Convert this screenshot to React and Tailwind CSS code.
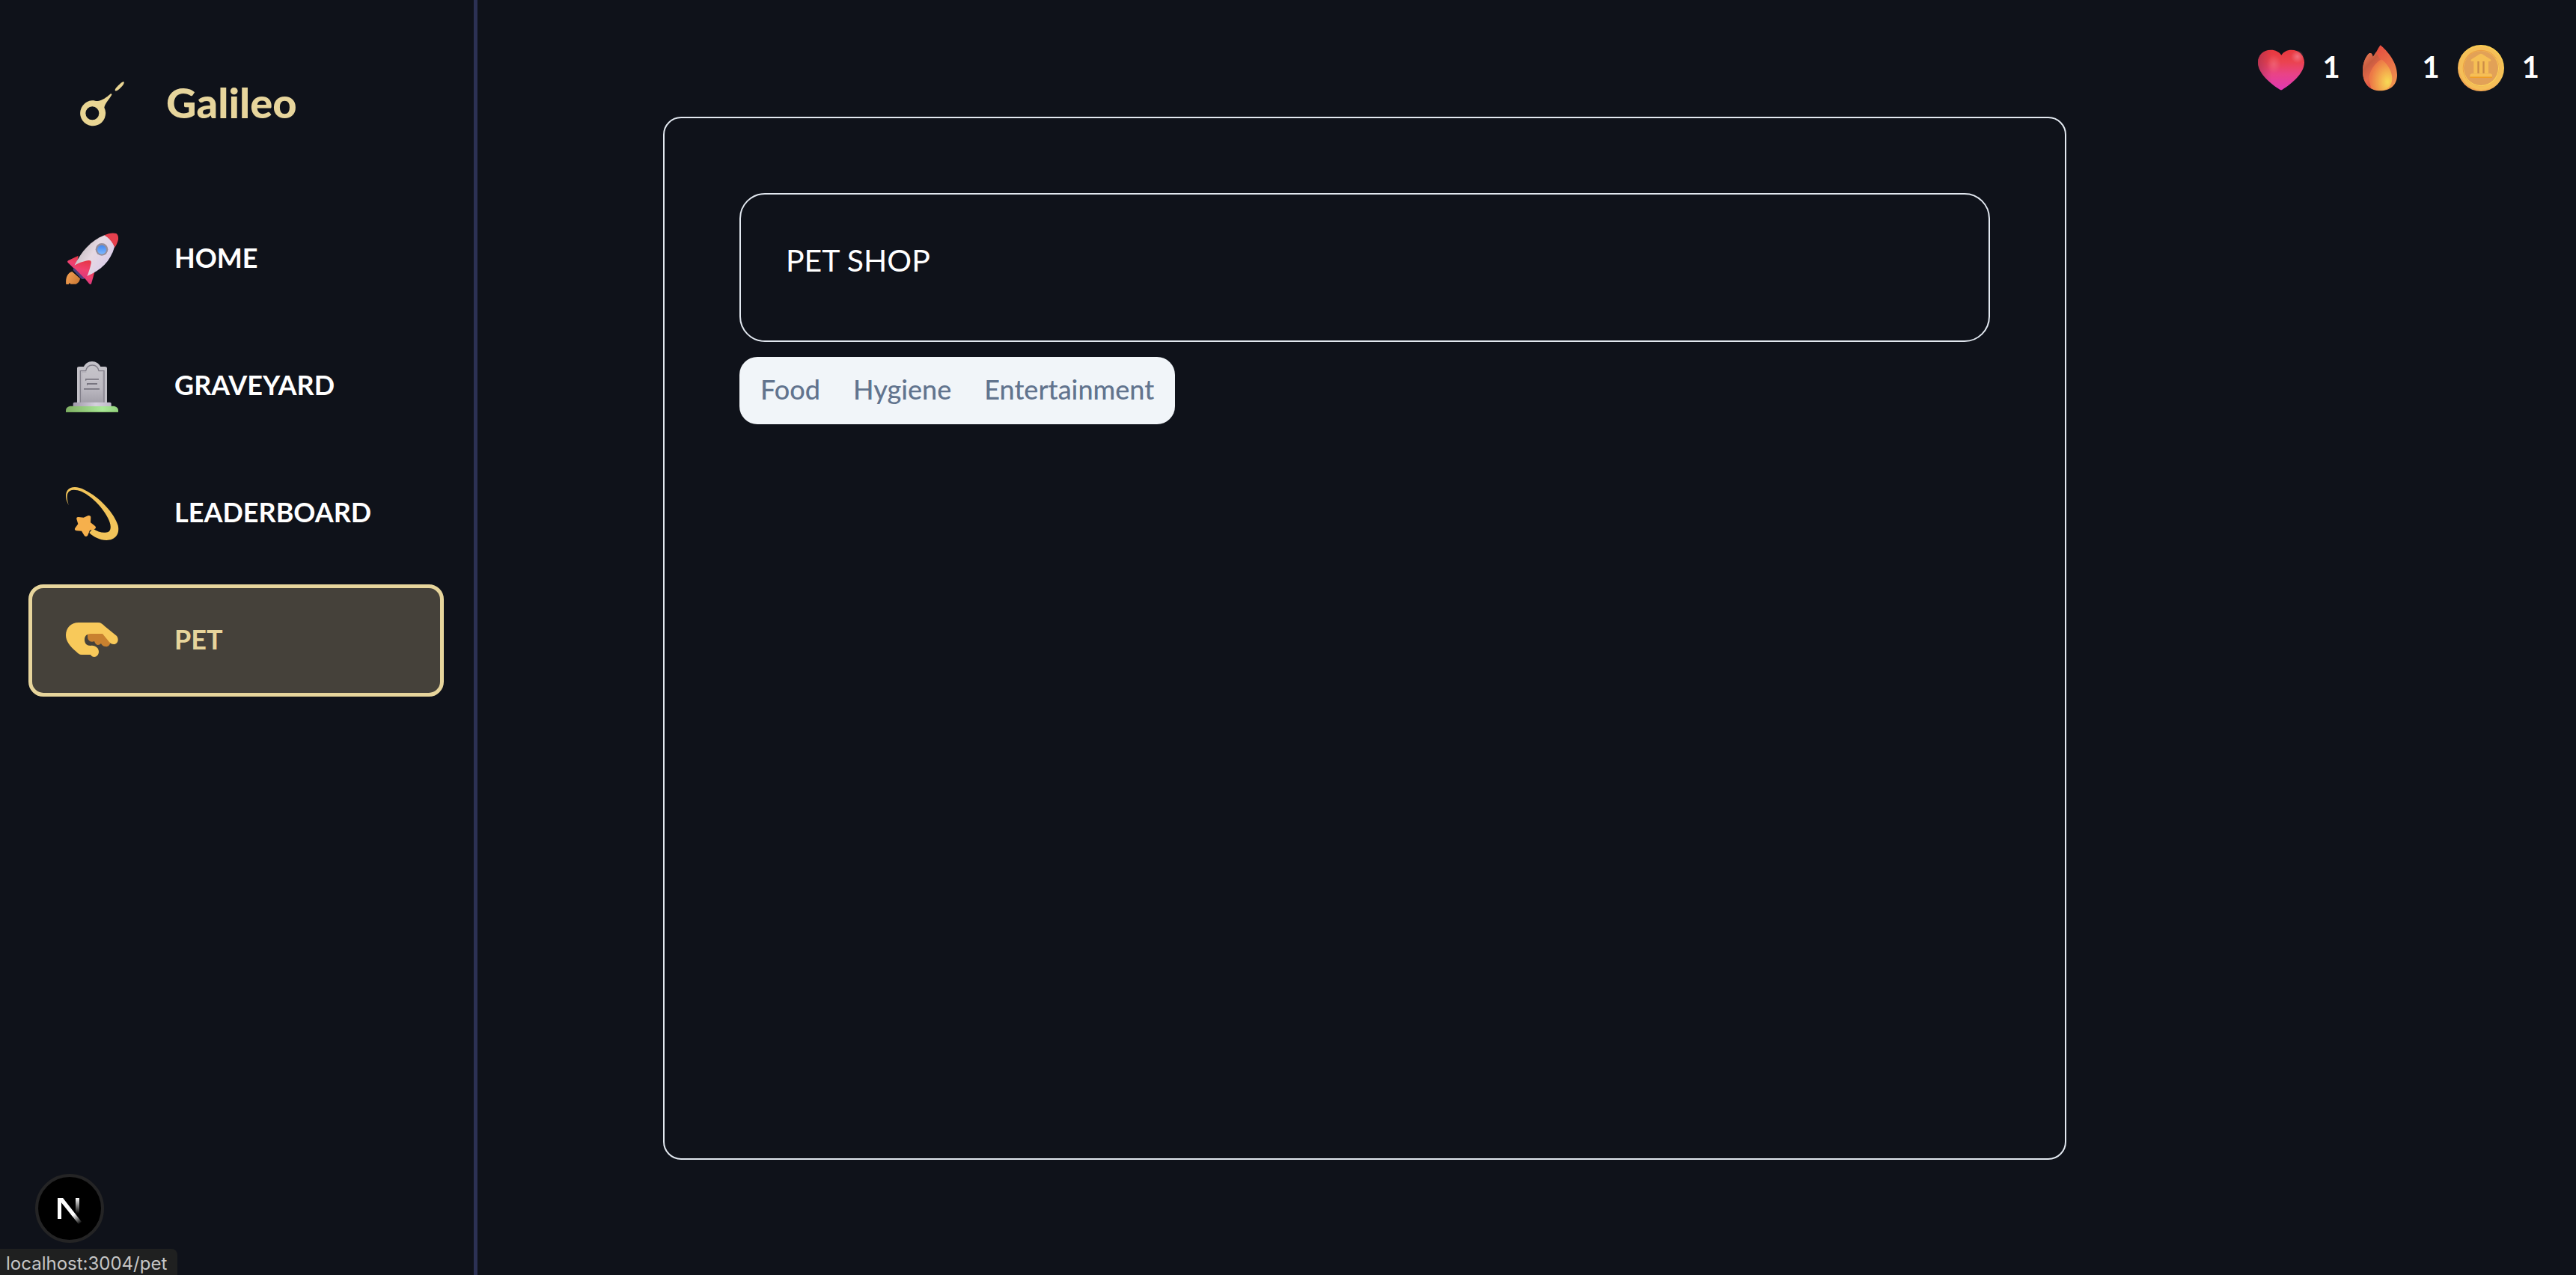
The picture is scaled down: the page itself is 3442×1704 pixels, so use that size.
import { useState } from "react"

function CometLogo() {
    return (
        <svg className="w-[60px] h-[60px] shrink-0" viewBox="36 35 180 180" aria-hidden="true">
            <path fill="#e9d593" fillRule="evenodd" d="M160 85c4-3 8 1 5 5-11 18-26 34-29 49a51 51 0 1 1-49-28c9-1 15 3 24 2 18-3 34-15 49-28zM88 135a27 27 0 1 0 0 54a27 27 0 0 0 0-54z" />
            <path fill="#e9d593" d="M214 36c4 4-2 12-11 22-10 10-19 17-23 14-4-4 4-13 12-21 9-9 18-18 22-15z" />
        </svg>
    )
}

function Rocket() {
    return (
        <svg className="w-[70px] h-[70px] shrink-0 overflow-visible" viewBox="54 63 210 210" aria-hidden="true">
            <defs>
                <linearGradient id="rocketBody" x1="0" y1="0.3" x2="1" y2="0.9">
                    <stop offset="0" stopColor="#bdb4b8" />
                    <stop offset="0.4" stopColor="#e6d9e2" />
                    <stop offset="1" stopColor="#d5c8ee" />
                </linearGradient>
                <linearGradient id="rocketFin" x1="0.6" y1="0" x2="0.4" y2="1">
                    <stop offset="0" stopColor="#e63747" />
                    <stop offset="0.5" stopColor="#f0416f" />
                    <stop offset="1" stopColor="#d9387f" />
                </linearGradient>
                <linearGradient id="rocketFlame" x1="0" y1="0" x2="1" y2="0.5">
                    <stop offset="0" stopColor="#f7a354" />
                    <stop offset="1" stopColor="#cf7c37" />
                </linearGradient>
                <linearGradient id="rocketWindow" x1="0" y1="0" x2="0" y2="1">
                    <stop offset="0" stopColor="#4487f0" />
                    <stop offset="1" stopColor="#7cb8ff" />
                </linearGradient>
            </defs>
            <path fill="url(#rocketFlame)" d="M79 219c-18 5-27 24-24 51h10l4-6 4 5h22c9-4 15-12 16-22z" />
            <path fill="url(#rocketFin)" d="M104 155l-41 20c-4 3-3 6 0 9l30 29z" />
            <path fill="url(#rocketFin)" d="M172 211l-16 57c-2 3-6 2-9-1l-25-31z" />
            <path fill="#4a3e7c" d="M88 204l42 43c-6 4-12 2-17-2l-27-28c-5-5-3-10 2-13z" />
            <path fill="url(#rocketBody)" d="M209 73c-55 21-93 66-120 120 9 17 32 38 50 44 56-24 94-59 110-117-6-20-22-39-40-47z" />
            <path fill="#e6404e" d="M208 73c17-8 34-11 47-7 9 4 10 16 9 25-3 12-8 23-14 31-8-20-24-39-42-49z" />
            <path fill="url(#rocketFin)" d="M89 194c11-7 34-17 55-20 10-1 13 4 11 12-4 19-10 37-16 52l-10 9-42-43z" />
            <circle cx="198" cy="130" r="25" fill="#968e9c" />
            <circle cx="198" cy="131" r="18" fill="url(#rocketWindow)" />
        </svg>
    )
}

function Tombstone() {
    return (
        <svg className="w-[70px] h-[70px] shrink-0 overflow-visible" viewBox="54 48 210 210" aria-hidden="true">
            <defs>
                <linearGradient id="stoneFace" x1="0" y1="0" x2="0" y2="1">
                    <stop offset="0" stopColor="#c6c4ca" />
                    <stop offset="0.6" stopColor="#bdbac2" />
                    <stop offset="1" stopColor="#a29fa9" />
                </linearGradient>
                <linearGradient id="stoneBase" x1="0" y1="0" x2="1" y2="0">
                    <stop offset="0" stopColor="#9f98a9" />
                    <stop offset="0.6" stopColor="#d5d0dd" />
                    <stop offset="1" stopColor="#bdb7c6" />
                </linearGradient>
                <linearGradient id="grass" x1="0" y1="0" x2="1" y2="0">
                    <stop offset="0" stopColor="#7fae63" />
                    <stop offset="0.7" stopColor="#aae898" />
                    <stop offset="1" stopColor="#93d27e" />
                </linearGradient>
            </defs>
            <path fill="#c3c1c8" d="M99 222V82c0-5 3-7 8-7h19c6-12 17-21 33-21s28 9 34 21h18c5 0 8 2 8 7v140z" />
            <path fill="url(#stoneFace)" stroke="#807d88" strokeWidth="4" d="M112 221V92h22c3-14 12-23 26-23s23 9 26 23h21v129" />
            <path fill="none" stroke="#a8a5af" strokeWidth="2" d="M118 220V97h18M203 97v123" />
            <path fill="#77747f" d="M132 123h54v8h-54zM138 141h42v9h-42zM126 162h63v5h-63z" />
            <path fill="#c6c3cb" d="M136 128h50v4h-50zM141 147h39v3h-39z" />
            <path fill="url(#grass)" d="M54 258v-7c0-11 8-18 22-18h166c14 0 22 7 22 18v7z" />
            <path fill="#6fa555" d="M54 254h210v4H54z" opacity="0.5" />
            <path fill="url(#stoneBase)" d="M83 234v-10c0-4 2-6 6-6h141c4 0 6 2 6 6v10z" />
        </svg>
    )
}

function ShootingStar() {
    return (
        <svg className="w-[70px] h-[70px] shrink-0 overflow-visible" viewBox="54 48 210 210" aria-hidden="true">
            <path fill="#f2c45a" d="M66 121c-13-22-16-47-5-61 12-15 39-16 68-1 60 29 121 95 134 143 8 36-12 59-46 59-27-1-51-12-69-30l14-17c23 17 48 20 63 13 13-8 10-31-3-56-25-49-79-100-121-110-20-4-35-1-40 13-4 12-1 30 5 47z" />
            <path fill="#f6b04c" d="M105 168l20 2 17-7c6-3 13 0 12 7l-1 20 18 14c5 5 4 10-2 12l-19 5-8 20c-3 6-10 6-14 1l-11-18-20-1c-8-1-9-7-5-12l11-15-6-20c-1-6 2-9 8-8z" />
        </svg>
    )
}

function PinchingHand() {
    return (
        <svg className="w-[70px] h-[70px] shrink-0" viewBox="0 0 70 70" aria-hidden="true">
            <path fill="#c9812f" d="M29 25h21l10 12c-1 4-4 7-7 6-3 0-5-2-6-4-3 3-7 3-9-3-5 2-9-1-9-6z" />
            <path fill="#f8c95a" d="M17 11h26c4 0 6 2 9 5l16 13c4 6 0 11-4 11-3 0-4-1-6-3l-9-11H33c-6 0-8 4-8 8 0 5 3 8 8 8 6-1 11 3 11 8 0 4-3 7-6 7-2 0-4-1-5-3H21c-3 0-5-2-7-4C5 43 0 35 0 28 0 18 7 11 17 11z" />
        </svg>
    )
}

function Heart() {
    return (
        <svg className="w-[62px] h-[62px] shrink-0" viewBox="78 61 186 186" aria-hidden="true">
            <defs>
                <linearGradient id="heartFill" x1="0" y1="0" x2="0" y2="1">
                    <stop offset="0" stopColor="#e8383f" />
                    <stop offset="0.3" stopColor="#ea434f" />
                    <stop offset="0.6" stopColor="#e94386" />
                    <stop offset="1" stopColor="#e038b4" />
                </linearGradient>
                <radialGradient id="heartShine">
                    <stop offset="0" stopColor="#f37b8b" stopOpacity="0.8" />
                    <stop offset="1" stopColor="#f37b8b" stopOpacity="0" />
                </radialGradient>
                <linearGradient id="heartShade" x1="0" y1="0" x2="1" y2="0">
                    <stop offset="0" stopColor="#9c2a50" stopOpacity="0.6" />
                    <stop offset="0.3" stopColor="#9c2a50" stopOpacity="0" />
                </linearGradient>
            </defs>
            <path fill="url(#heartFill)" d="M172 102c8-13 22-21 40-21 31 0 52 22 52 50 0 49-61 93-88 109q-5 3-10 0c-27-16-88-60-88-109 0-28 21-50 52-50 18 0 34 8 42 21z" />
            <path fill="url(#heartShade)" d="M172 102c8-13 22-21 40-21 31 0 52 22 52 50 0 49-61 93-88 109q-5 3-10 0c-27-16-88-60-88-109 0-28 21-50 52-50 18 0 34 8 42 21z" />
            <circle cx="236" cy="108" r="26" fill="url(#heartShine)" />
            <ellipse cx="142" cy="138" rx="28" ry="38" fill="url(#heartShine)" opacity="0.6" />
        </svg>
    )
}

function Flame() {
    return (
        <svg className="w-[62px] h-[62px] shrink-0" viewBox="486 61 186 186" aria-hidden="true">
            <defs>
                <linearGradient id="flameOuter" x1="0.3" y1="0" x2="0.8" y2="1">
                    <stop offset="0" stopColor="#e4463e" />
                    <stop offset="0.5" stopColor="#ea7048" />
                    <stop offset="1" stopColor="#f39a50" />
                </linearGradient>
                <linearGradient id="flameBack" x1="0" y1="0" x2="0.5" y2="1">
                    <stop offset="0" stopColor="#f0835a" />
                    <stop offset="0.4" stopColor="#c85c40" />
                    <stop offset="0.7" stopColor="#e4694a" />
                    <stop offset="1" stopColor="#e34c43" />
                </linearGradient>
                <radialGradient id="flameInner" cx="0.8" cy="0.72" r="0.75">
                    <stop offset="0" stopColor="#f8da55" />
                    <stop offset="0.5" stopColor="#f4a94d" />
                    <stop offset="1" stopColor="#ec7846" />
                </radialGradient>
            </defs>
            <path fill="url(#flameOuter)" d="M575 62c26 22 67 67 67 119 0 42-29 64-68 64s-70-26-70-79c0-33 13-60 26-71 7-4 13 2 15 14 12-11 18-32 30-47z" />
            <path fill="url(#flameBack)" d="M545 109c-2-12-8-18-15-14-13 11-26 38-26 71 0 35 15 60 36 71-20-50 4-95 35-117l-18-30z" />
            <path fill="url(#flameInner)" d="M576 121c4-2 7 0 10 3 22 20 36 46 36 72 0 28-18 48-46 48s-46-20-46-48c0-29 22-60 46-75z" />
        </svg>
    )
}

function Coin() {
    return (
        <svg className="w-[62px] h-[62px] shrink-0" viewBox="882 62 186 186" aria-hidden="true">
            <defs>
                <linearGradient id="coinRim" x1="0.8" y1="0" x2="0.2" y2="1">
                    <stop offset="0" stopColor="#fbd252" />
                    <stop offset="0.5" stopColor="#f6c158" />
                    <stop offset="1" stopColor="#f3a251" />
                </linearGradient>
            </defs>
            <circle cx="975" cy="155" r="93" fill="url(#coinRim)" />
            <circle cx="976" cy="155" r="87" fill="#f5bf58" />
            <circle cx="975" cy="155" r="73" fill="#eda045" />
            <circle cx="976" cy="157" r="71" fill="#fbd25a" />
            <circle cx="975" cy="155" r="69" fill="#e2a157" />
            <path fill="#cc8c48" d="M950 128h52v48h-52z" />
            <path fill="#f6bf55" d="M970 99q5-3 10 0l33 21c4 4 2 8-2 8h-71c-5 0-7-4-3-8zM946 126h15v50h-15zM968 126h14v50h-14zM989 126h16v50h-16zM940 177h72q8 1 8 9v4h-89v-4q0-8 9-9z" />
            <path fill="#f19e22" d="M931 190h89v4h-89z" />
        </svg>
    )
}

function DevBadge() {
    return (
        <button type="button" aria-label="Open dev tools" className="fixed left-[47px] bottom-[43px] size-[92px] rounded-full border-[4px] border-[#242425] bg-black">
            <svg className="w-full h-full" viewBox="0 0 84 84" aria-hidden="true">
                <defs>
                    <linearGradient id="badgeStem" x1="0" y1="28" x2="0" y2="49" gradientUnits="userSpaceOnUse">
                        <stop offset="0" stopColor="#fff" />
                        <stop offset="1" stopColor="#fff" stopOpacity="0" />
                    </linearGradient>
                    <linearGradient id="badgeSlash" x1="48" y1="50" x2="57" y2="62" gradientUnits="userSpaceOnUse">
                        <stop offset="0" stopColor="#fff" />
                        <stop offset="1" stopColor="#fff" stopOpacity="0" />
                    </linearGradient>
                </defs>
                <path fill="#fff" d="M26 28h5v28h-5z" />
                <path fill="url(#badgeSlash)" d="M26 28h7l25 32-4 3z" />
                <path fill="url(#badgeStem)" d="M50 28h5v21h-5z" />
            </svg>
        </button>
    )
}

const links = [
    { name: "HOME", href: "/home", icon: <Rocket /> },
    { name: "GRAVEYARD", href: "/graveyard", icon: <Tombstone /> },
    { name: "LEADERBOARD", href: "/leaderboard", icon: <ShootingStar /> },
    { name: "PET", href: "/pet", icon: <PinchingHand /> },
]

const stats = [
    { name: "hearts", value: 1, icon: <Heart /> },
    { name: "streak", value: 1, icon: <Flame /> },
    { name: "coins", value: 1, icon: <Coin /> },
]

function Sidebar() {
    const active = "/pet";

    return (
        <aside className="w-[638px] shrink-0 border-r-[5px] border-[#2c3154] pl-[38px] pr-10 pt-[107px]">
            <a href="/" className="flex items-center gap-14 h-16 pl-[68px]">
                <CometLogo />
                <span className="pb-1 text-[56px] leading-[64px] font-black text-[#e7d59c]">Galileo</span>
            </a>
            <nav className="mt-[100px] flex flex-col gap-5">
                {links.map(link => (
                    <a key={link.href} href={link.href}
                        className={link.href === active
                            ? "flex items-center gap-[75px] h-[150px] px-[45px] border-[5px] rounded-[20px] text-4xl font-bold border-[#e7d59c] bg-[#45413a] text-[#e7d59c]"
                            : "flex items-center gap-[75px] h-[150px] px-[45px] border-[5px] rounded-[20px] text-4xl font-bold border-transparent text-white"}>
                        {link.icon}
                        <span className="pb-1">{link.name}</span>
                    </a>
                ))}
            </nav>
        </aside>
    )
}

function Stats() {
    return (
        <div className="flex items-center justify-end gap-6 pt-[60px] pr-[49px] self-start">
            {stats.map(stat => (
                <div key={stat.name} className="flex items-center gap-6">
                    {stat.icon}
                    <span className="pb-1 text-[40px] leading-[56px] font-bold text-white">{stat.value}</span>
                </div>
            ))}
        </div>
    )
}

export default function App() {
    const [tab, setTab] = useState('');
    const tabs = ["Food", "Hygiene", "Entertainment"];

    return (
        <div className="flex min-h-screen bg-[#0f121a] font-['Lato',sans-serif]">
            <Sidebar />
            <main className="flex-1 grid grid-cols-[248fr_1875fr_681fr]">
                <section className="col-start-2 mt-[156px] mb-[154px] p-[100px] border-2 border-slate-200 rounded-3xl">
                    <div className="h-[199px] px-[60px] pt-[58px] border-2 border-slate-200 rounded-[34px]">
                        <h1 className="text-[41px] leading-[60px] text-white">PET SHOP</h1>
                    </div>
                    <div role="tablist" className="mt-5 inline-flex items-center h-[90px] px-[6px] rounded-3xl bg-slate-100">
                        {tabs.map(name => (
                            <button key={name} type="button" role="tab" aria-selected={tab === name} onClick={() => setTab(name)}
                                className="px-[22px] pb-1 text-4xl font-medium text-slate-500">
                                {name}
                            </button>
                        ))}
                    </div>
                </section>
                <Stats />
            </main>
            <DevBadge />
            <div className="fixed left-0 bottom-0 h-[35px] pl-2 pr-[14px] pt-1 flex items-center rounded-tr-lg bg-[#1f2020] font-['Inter',sans-serif] text-2xl text-[#c6c6c6]">
                localhost:3004/pet
            </div>
        </div>
    )
}
